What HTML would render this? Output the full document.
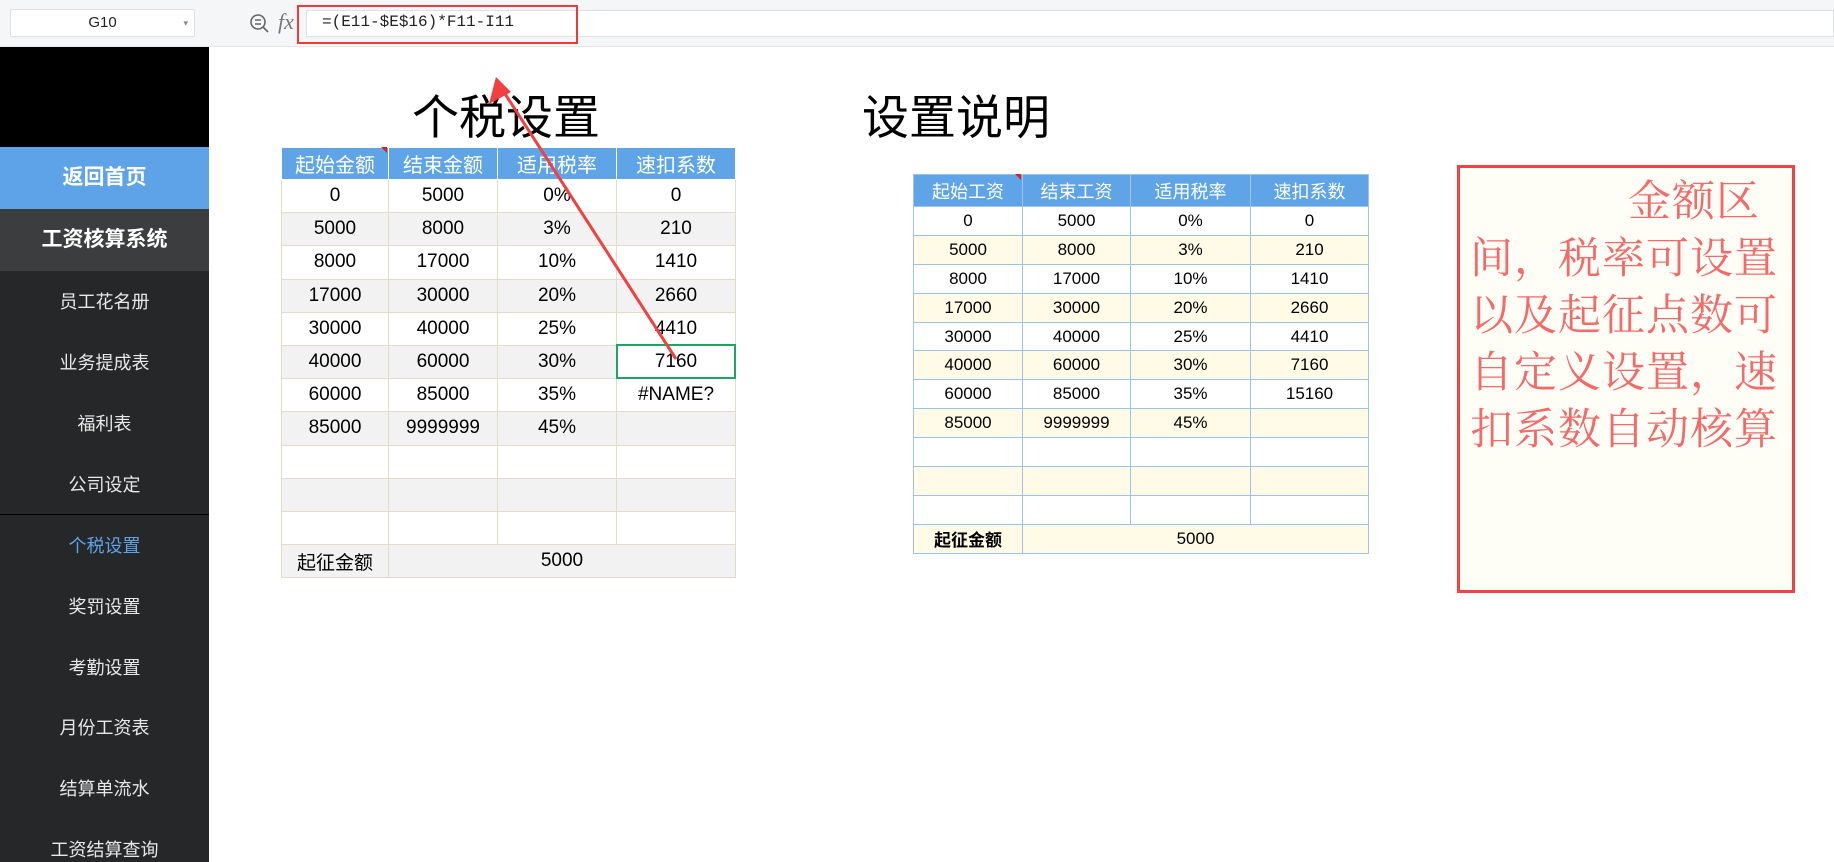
<!DOCTYPE html>
<html><head><meta charset="utf-8"><style>
*{margin:0;padding:0;box-sizing:border-box}
body{width:1834px;height:862px;overflow:hidden;background:#fff;position:relative;font-family:"Liberation Sans","Noto Sans CJK SC",sans-serif}
.a{position:absolute}
#tb{left:0;top:0;width:1834px;height:47px;background:#f5f6f8;border-bottom:1px solid #e4e6ea}
#nb{left:10px;top:9px;width:185px;height:28px;background:#fff;border:1px solid #dcdfe3;border-radius:2px;text-align:center;line-height:26px;font-size:15px;color:#222}
#fi{left:306px;top:10px;width:1528px;height:27px;background:#fff;border:1px solid #dcdfe3}
#rb{left:297px;top:5px;width:281px;height:39px;border:2px solid #f03a3a}
#sb{left:0;top:47px;width:209px;height:815px;background:#262728}
.it{position:absolute;left:0;width:209px;text-align:center;color:#e8e8e8;font-size:18px}
table{border-collapse:collapse;position:absolute;table-layout:fixed}
#t1 td{border:1px solid #e2ddcb;text-align:center;font-size:19px;height:33.2px;color:#000}
#t1 tr.h td{background:#5fa4e6;color:#fff;border-color:#fff;font-size:20px;height:32px}
#t1 tr.g td{background:#f2f2f2}
#t2 td{border:1px solid #9dc3e6;text-align:center;font-size:17px;height:28.9px;color:#000}
#t2 tr.h td{background:#5fa4e6;color:#fff;font-size:18px;height:32px}
#t2 tr.y td{background:#fffbe6}
.ttl{position:absolute;font-size:47px;color:#000;line-height:1}
#note{left:1457px;top:165px;width:338px;height:428px;border:3px solid #f04444;background:#fffef6;font-family:"Liberation Serif","Noto Serif CJK SC",serif;color:#f26a6a;font-size:43px;line-height:57px;padding:6px 6px 0 10px;letter-spacing:1px}
</style></head><body>
<div class="a" id="tb"></div>
<div class="a" id="nb">G10<span style="position:absolute;right:6px;top:0;font-size:9px;color:#888">▾</span></div>
<svg class="a" style="left:248px;top:12px" width="24" height="24" viewBox="0 0 24 24"><circle cx="10" cy="10" r="7" fill="none" stroke="#666" stroke-width="1.6"/><path d="M7 8h6M7 12h6M15 15l5 5" stroke="#666" stroke-width="1.6"/></svg>
<div class="a" style="left:278px;top:9px;font-family:'Liberation Serif',serif;font-style:italic;font-size:22px;color:#777">fx</div>
<div class="a" id="fi"></div>
<div class="a" style="left:322px;top:13px;font-family:'Liberation Mono',monospace;font-size:16px;color:#222">=(E11-$E$16)*F11-I11</div>
<div class="a" id="rb"></div>

<div class="a" id="sb"></div>
<div class="a" style="left:0;top:47px;width:209px;height:100px;background:#000"></div>
<div class="a" style="left:0;top:147px;width:209px;height:62px;background:#5ea3e8;color:#fff;font-size:21px;font-weight:bold;text-align:center;line-height:62px">返回首页</div>
<div class="a" style="left:0;top:209px;width:209px;height:62px;background:#3b3d3e;color:#fff;font-size:21px;font-weight:bold;text-align:center;line-height:62px">工资核算系统</div>
<div class="it" style="top:288px">员工花名册</div>
<div class="it" style="top:349px">业务提成表</div>
<div class="it" style="top:410px">福利表</div>
<div class="it" style="top:471px">公司设定</div>
<div class="a" style="left:0;top:514px;width:209px;height:1px;background:#000"></div>
<div class="it" style="top:532px;color:#5ea3e8">个税设置</div>
<div class="it" style="top:593px">奖罚设置</div>
<div class="it" style="top:654px">考勤设置</div>
<div class="it" style="top:714px">月份工资表</div>
<div class="it" style="top:775px">结算单流水</div>
<div class="it" style="top:836px">工资结算查询</div>

<div class="ttl" style="left:412px;top:94px">个税设置</div>
<div class="ttl" style="left:862px;top:94px">设置说明</div>

<table id="t1" style="left:281px;top:147px;width:454px">
<colgroup><col style="width:107px"><col style="width:109px"><col style="width:119px"><col style="width:119px"></colgroup>
<tr class="h"><td>起始金额</td><td>结束金额</td><td>适用税率</td><td>速扣系数</td></tr>
<tr><td>0</td><td>5000</td><td>0%</td><td>0</td></tr>
<tr class="g"><td>5000</td><td>8000</td><td>3%</td><td>210</td></tr>
<tr><td>8000</td><td>17000</td><td>10%</td><td>1410</td></tr>
<tr class="g"><td>17000</td><td>30000</td><td>20%</td><td>2660</td></tr>
<tr><td>30000</td><td>40000</td><td>25%</td><td>4410</td></tr>
<tr class="g"><td>40000</td><td>60000</td><td>30%</td><td style="background:#fff">7160</td></tr>
<tr><td>60000</td><td>85000</td><td>35%</td><td>#NAME?</td></tr>
<tr class="g"><td>85000</td><td>9999999</td><td>45%</td><td></td></tr>
<tr><td></td><td></td><td></td><td></td></tr>
<tr class="g"><td></td><td></td><td></td><td></td></tr>
<tr><td></td><td></td><td></td><td></td></tr>
<tr class="g"><td>起征金额</td><td colspan="3">5000</td></tr>
</table>
<div class="a" style="left:616px;top:344px;width:120px;height:35px;border:2px solid #1fa463"></div>
<div class="a" style="left:381px;top:147px;width:0;height:0;border-left:6px solid transparent;border-top:6px solid #e02020"></div>

<table id="t2" style="left:913px;top:174px;width:455px">
<colgroup><col style="width:109px"><col style="width:108px"><col style="width:120px"><col style="width:118px"></colgroup>
<tr class="h"><td>起始工资</td><td>结束工资</td><td>适用税率</td><td>速扣系数</td></tr>
<tr><td>0</td><td>5000</td><td>0%</td><td>0</td></tr>
<tr class="y"><td>5000</td><td>8000</td><td>3%</td><td>210</td></tr>
<tr><td>8000</td><td>17000</td><td>10%</td><td>1410</td></tr>
<tr class="y"><td>17000</td><td>30000</td><td>20%</td><td>2660</td></tr>
<tr><td>30000</td><td>40000</td><td>25%</td><td>4410</td></tr>
<tr class="y"><td>40000</td><td>60000</td><td>30%</td><td>7160</td></tr>
<tr><td>60000</td><td>85000</td><td>35%</td><td>15160</td></tr>
<tr class="y"><td>85000</td><td>9999999</td><td>45%</td><td></td></tr>
<tr><td></td><td></td><td></td><td></td></tr>
<tr class="y"><td></td><td></td><td></td><td></td></tr>
<tr><td></td><td></td><td></td><td></td></tr>
<tr class="y"><td style="font-weight:bold">起征金额</td><td colspan="3">5000</td></tr>
</table>
<div class="a" style="left:1015px;top:174px;width:0;height:0;border-left:6px solid transparent;border-top:6px solid #e02020"></div>

<div class="a" id="note"><div style="padding-left:158px">金额区</div>间，税率可设置以及起征点数可自定义设置，速扣系数自动核算</div>

<svg class="a" style="left:0;top:0" width="1834" height="862"><line x1="676" y1="359" x2="500" y2="86" stroke="#f04040" stroke-width="3"/><path d="M496 77 L489 104 L511 92 Z" fill="#f04040"/></svg>
</body></html>
